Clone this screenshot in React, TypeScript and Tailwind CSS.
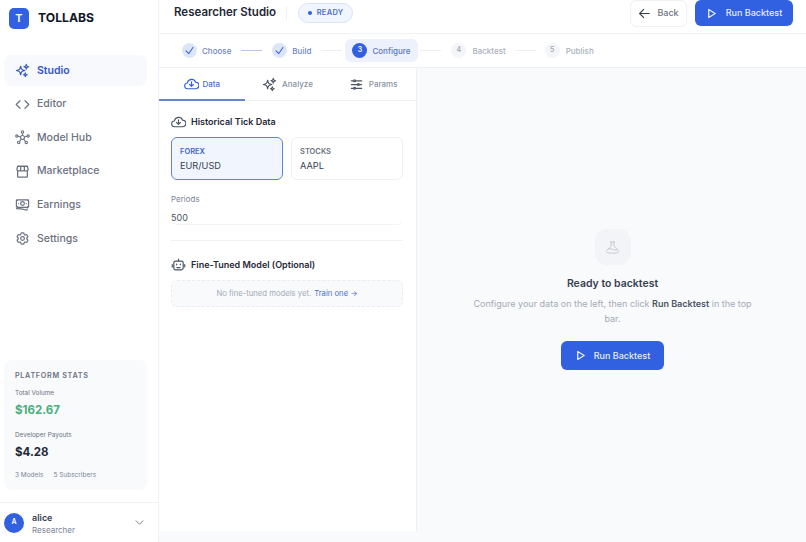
import React from "react";
import {
  HiOutlineSparkles,
  HiOutlineBanknotes,
  HiOutlineCog6Tooth,
  HiOutlineAdjustmentsHorizontal,
  HiOutlineBeaker,
  HiOutlineArrowLeft,
  HiOutlineCheck,
  HiOutlineChevronDown,
} from "react-icons/hi2";
import { Code } from "lucide-react";

type IconProps = { className?: string };

const HubIcon = ({ className }: IconProps) => (
  <svg viewBox="0 0 20 20" fill="none" stroke="currentColor" strokeWidth="1.5" className={className}>
    <circle cx="10" cy="10" r="2.6" />
    <circle cx="10" cy="2.6" r="1.6" />
    <circle cx="2.4" cy="8" r="1.5" />
    <circle cx="17.6" cy="8" r="1.5" />
    <circle cx="5" cy="16.6" r="1.6" />
    <circle cx="15" cy="16.6" r="1.6" />
    <path d="M10 4.2v3.2M3.9 8.4l3.6 1M16.1 8.4l-3.6 1M6 15.3l2.4-3.2M14 15.3l-2.4-3.2" />
  </svg>
);

const ShopIcon = ({ className }: IconProps) => (
  <svg viewBox="0 0 20 20" fill="none" stroke="currentColor" strokeWidth="1.7" strokeLinejoin="round" className={className}>
    <path d="M3.5 9v7.5a1 1 0 0 0 1 1h11a1 1 0 0 0 1-1V9" />
    <path d="M2.5 7.5 3.5 3h13l1 4.5a2 2 0 0 1-2 1.6H4.5a2 2 0 0 1-2-1.6Z" />
    <path d="M7.5 3v6M12.5 3v6" />
  </svg>
);

const CloudIcon = ({ className }: IconProps) => (
  <svg viewBox="0 0 24 20" fill="none" stroke="currentColor" strokeWidth="1.8" strokeLinecap="round" strokeLinejoin="round" className={className}>
    <path d="M6 17.5a4.6 4.6 0 0 1-.6-9.2 6.8 6.8 0 0 1 13.1-1.2 5.2 5.2 0 0 1 .2 10.4Z" />
    <path d="M12 6.5v7M9 10.8l3 3 3-3" />
  </svg>
);

const BotIcon = ({ className }: IconProps) => (
  <svg viewBox="0 0 24 24" fill="none" stroke="currentColor" strokeWidth="1.9" strokeLinecap="round" strokeLinejoin="round" className={className}>
    <rect x="4.5" y="6.5" width="15" height="14" rx="3" />
    <path d="M12 6.5V3.5M2 12v4M22 12v4M9.5 17h5" />
    <path d="M9 11.5v1M15 11.5v1" />
  </svg>
);

const PlayIcon = ({ className }: IconProps) => (
  <svg viewBox="0 0 12 12" fill="none" stroke="currentColor" strokeWidth="1.4" strokeLinejoin="round" className={className}>
    <path d="M3 1.6v8.8L10 6Z" />
  </svg>
);

const navItems = [
  { label: "Studio", icon: HiOutlineSparkles, active: true },
  { label: "Editor", icon: Code },
  { label: "Model Hub", icon: HubIcon },
  { label: "Marketplace", icon: ShopIcon },
  { label: "Earnings", icon: HiOutlineBanknotes },
  { label: "Settings", icon: HiOutlineCog6Tooth },
];

const Sidebar = () => (
  <aside className="w-[159px] h-full shrink-0 flex flex-col border-r border-[#eef0f5] bg-white">
    <div className="flex items-center gap-[9px] pl-[9px] h-[37px]">
      <div className="w-5 h-[21px] rounded-[5px] bg-[#3160e0] text-white text-[11px] font-semibold flex items-center justify-center">
        T
      </div>
      <span className="text-[12.2px] leading-none font-bold text-[#111827]">TOLLABS</span>
    </div>
    <nav className="mt-[18px] pl-1 pr-[11px] flex flex-col gap-[2.6px]">
      {navItems.map((item) => (
        <div
          key={item.label}
          className={`h-[31px] rounded-lg flex items-center gap-[7px] pl-[11px] text-[10.5px] font-medium ${
            item.active ? "bg-[#f7f9fc] text-[#3257c4] font-semibold" : "text-[#6b7280]"
          }`}
        >
          <item.icon className="w-[15px] h-[15px] shrink-0" strokeWidth={1.9} />
          {item.label}
        </div>
      ))}
    </nav>
    <div className="mt-auto ml-1 mr-[11px] rounded-lg bg-[#f8fafc] h-[130px] px-[11px] pt-[11px]">
      <div className="text-[7.2px] leading-[10px] font-semibold tracking-[0.7px] text-[#6b7280]">PLATFORM STATS</div>
      <div className="mt-[8px] text-[6.4px] leading-[9px] text-[#6b7280]">Total Volume</div>
      <div className="mt-[5px] text-[11.5px] leading-[15px] font-bold text-[#4caf7d]">$162.67</div>
      <div className="mt-[13px] text-[6.4px] leading-[9px] text-[#6b7280]">Developer Payouts</div>
      <div className="mt-[5px] text-[11.5px] leading-[15px] font-bold text-[#1f2937]">$4.28</div>
      <div className="mt-[11px] flex gap-[10px] text-[6.5px] leading-[9px] text-[#7b8494]">
        <span>3 Models</span>
        <span>5 Subscribers</span>
      </div>
    </div>
    <div className="mt-[12px] h-[40px] border-t border-[#f1f3f7] flex items-center pl-1 pr-[13px]">
      <div className="w-[20px] h-[20px] rounded-full bg-[#3160e0] text-white text-[7px] font-semibold flex items-center justify-center">
        A
      </div>
      <div className="ml-2 pt-[3px]">
        <div className="text-[9px] leading-[12px] font-semibold text-[#374151]">alice</div>
        <div className="text-[8px] leading-[12px] text-[#7b8494]">Researcher</div>
      </div>
      <HiOutlineChevronDown className="ml-auto w-[11px] h-[11px] text-[#6b7280]" strokeWidth={2} />
    </div>
  </aside>
);

const TopBar = () => (
  <header className="h-[34px] shrink-0 flex items-center border-b border-[#f0f1f5] pl-[15px] pr-[13px] pb-[7px]">
    <h1 className="text-[11.5px] font-semibold text-[#1f2937]">Researcher Studio</h1>
    <div className="w-px h-[14px] bg-[#f0f1f5] ml-[10px]" />
    <div className="ml-[11px] h-[20px] w-[55px] flex items-center justify-center gap-[5px] rounded-full border border-[#dbe4f6] bg-[#f1f5fd] text-[7.5px] font-semibold tracking-[0.3px] text-[#4a6fc9]">
      <span className="w-[4px] h-[4px] rounded-full bg-[#3160e0]" />
      READY
    </div>
    <button className="ml-auto h-[27px] w-[57px] rounded-md border border-[#eef0f4] bg-white flex items-center justify-center gap-[6px] text-[9px] font-medium text-[#6b7280]">
      <HiOutlineArrowLeft className="w-[13px] h-[13px] text-[#374151]" strokeWidth={2} />
      Back
    </button>
    <button className="ml-2 h-[26px] w-[98px] rounded-md bg-[#3160e0] flex items-center justify-center gap-[9px] text-[9px] font-medium text-[#e8edfb]">
      <PlayIcon className="w-[11px] h-[11px]" />
      Run Backtest
    </button>
  </header>
);

const Done = ({ label }: { label: string }) => (
  <div className="flex items-center gap-[5px]">
    <span className="w-[15px] h-[15px] rounded-full bg-[#dde5f8] flex items-center justify-center text-[#3160e0]">
      <HiOutlineCheck className="w-[11px] h-[11px]" strokeWidth={2.2} />
    </span>
    <span className="text-[8px] font-medium text-[#6f86bf]">{label}</span>
  </div>
);

const Todo = ({ n, label }: { n: number; label: string }) => (
  <div className="flex items-center gap-[6px]">
    <span className="w-[15px] h-[15px] rounded-full bg-[#f3f5f9] flex items-center justify-center text-[7px] font-medium text-[#9ca3af]">
      {n}
    </span>
    <span className="text-[8px] font-medium text-[#aab1bd]">{label}</span>
  </div>
);

const Stepper = () => (
  <div className="h-[34px] shrink-0 flex items-center border-b border-[#eef0f4] pl-[23px]">
    <Done label="Choose" />
    <div className="w-[21px] h-px bg-[#b9c6e8] mx-[10px]" />
    <Done label="Build" />
    <div className="w-[21px] h-px bg-[#eceef3] ml-[10px] mr-[3px]" />
    <div className="h-[23px] w-[73px] rounded-md bg-[#edf1fb] flex items-center pl-[7px] gap-[5px]">
      <span className="w-[15px] h-[15px] rounded-full bg-[#3160e0] text-white text-[7px] font-semibold flex items-center justify-center">
        3
      </span>
      <span className="text-[8px] font-medium text-[#5a77bd]">Configure</span>
    </div>
    <div className="w-[21px] h-px bg-[#eceef3] ml-[2px] mr-[10px]" />
    <Todo n={4} label="Backtest" />
    <div className="w-[21px] h-px bg-[#eceef3] ml-[9px] mr-[9px]" />
    <Todo n={5} label="Publish" />
  </div>
);

const Tabs = () => (
  <div className="h-[33px] shrink-0 grid grid-cols-3 border-b border-[#eef0f4]">
    <div className="relative flex items-center justify-center gap-[4px] text-[8px] font-medium text-[#4a6fc9]">
      <CloudIcon className="w-[15px] h-[14px] text-[#3160e0]" />
      Data
      <span className="absolute left-0 right-0 -bottom-px h-[2px] bg-[#6a86c9]" />
    </div>
    <div className="flex items-center justify-center gap-[5px] text-[8px] font-medium text-[#8a92a0]">
      <HiOutlineSparkles className="w-[15px] h-[15px] text-[#4b5563]" strokeWidth={1.9} />
      Analyze
    </div>
    <div className="flex items-center justify-center gap-[5px] text-[8px] font-medium text-[#8a92a0]">
      <HiOutlineAdjustmentsHorizontal className="w-[15px] h-[15px] text-[#4b5563]" strokeWidth={2} />
      Params
    </div>
  </div>
);

const DataPanel = () => (
  <div className="pl-[12px] pr-[13px] pt-[14px]">
    <div className="flex items-center gap-[5px] text-[9px] font-semibold text-[#1f2937]">
      <CloudIcon className="w-[15px] h-[14px] text-[#4b5563]" />
      Historical Tick Data
    </div>
    <div className="mt-[8px] grid grid-cols-2 gap-2">
      <div className="h-[43px] rounded-md border border-[#5f84d6] bg-[#f0f5fe] px-2 pt-[9px]">
        <div className="text-[7.5px] leading-[10px] font-semibold text-[#3f67c8]">FOREX</div>
        <div className="mt-[3px] text-[9.2px] leading-[12px] text-[#374151]">EUR/USD</div>
      </div>
      <div className="h-[43px] rounded-md border border-[#eef0f4] bg-white px-2 pt-[9px]">
        <div className="text-[7.5px] leading-[10px] font-semibold text-[#6b7280]">STOCKS</div>
        <div className="mt-[3px] text-[9.2px] leading-[12px] text-[#374151]">AAPL</div>
      </div>
    </div>
    <div className="mt-[14px] text-[8px] leading-[10px] text-[#7b8494]">Periods</div>
    <div className="mt-[8px] h-[13px] border-b border-[#f1f3f7] rounded-md text-[9px] leading-[12px] text-[#4b5563]">500</div>
    <div className="mt-[15px] h-px bg-[#eef0f4]" />
    <div className="mt-[16px] flex items-center gap-[5px] text-[9px] font-semibold text-[#1f2937]">
      <BotIcon className="w-[15px] h-[15px] text-[#4b5563]" />
      Fine-Tuned Model (Optional)
    </div>
    <div className="mt-[8px] h-[27px] rounded-md border border-dashed border-[#e9ecf2] bg-[#f8fafc] flex items-center justify-center gap-[3px] text-[7.7px] text-[#a3aab6]">
      No fine-tuned models yet.
      <span className="text-[#4a6fc9]">Train one →</span>
    </div>
  </div>
);

const EmptyState = () => (
  <div className="flex-1 flex flex-col items-center pt-[161px] pl-[2px]">
    <div className="w-9 h-9 rounded-xl bg-[#f2f4f8] flex items-center justify-center">
      <HiOutlineBeaker className="w-[15px] h-[15px] text-[#c2c7d0]" />
    </div>
    <div className="mt-[12px] text-[10.5px] leading-[14px] font-semibold text-[#374151]">Ready to backtest</div>
    <p className="mt-[5px] w-[290px] text-center text-[9px] leading-[15px] text-[#a3aab6]">
      Configure your data on the left, then click <b className="font-semibold text-[#4b5563]">Run Backtest</b> in the top bar.
    </p>
    <button className="mt-[15px] h-[29px] w-[103px] rounded-md bg-[#3160e0] flex items-center justify-center gap-[8px] text-[9px] font-medium text-[#e8edfb]">
      <PlayIcon className="w-[11px] h-[11px]" />
      Run Backtest
    </button>
  </div>
);

export default function App() {
  return (
    <div className="w-[806px] h-[542px] flex overflow-hidden bg-white font-['Inter',sans-serif]">
      <Sidebar />
      <main className="flex-1 flex flex-col min-w-0">
        <TopBar />
        <Stepper />
        <div className="flex-1 flex min-h-0 bg-[#f9fafc]">
          <section className="w-[258px] h-[463px] shrink-0 border-r border-[#eef0f4] bg-white flex flex-col">
            <Tabs />
            <DataPanel />
          </section>
          <EmptyState />
        </div>
      </main>
    </div>
  );
}
